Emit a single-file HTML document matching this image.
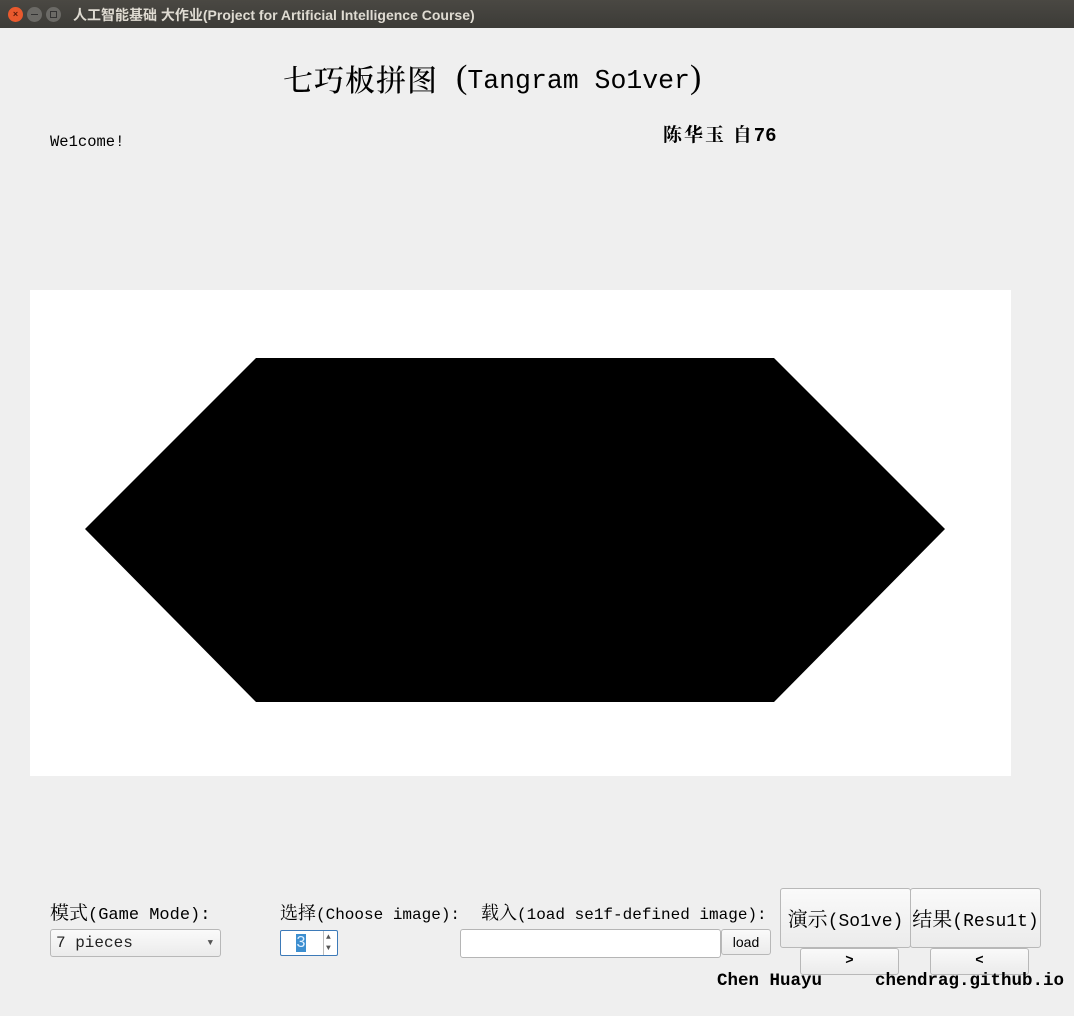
<!DOCTYPE html>
<html><head><meta charset="utf-8"><style>
*{margin:0;padding:0;box-sizing:border-box}
body{width:1074px;height:1016px;background:#efefef;position:relative;overflow:hidden;font-family:"Liberation Mono","Noto Serif CJK SC",monospace;color:#000}
.a{position:absolute;white-space:nowrap}
.tb{position:absolute;left:0;top:0;width:1074px;height:28px;background:linear-gradient(#4a4843,#3c3b37);}
.cj{font-family:"Noto Serif CJK SC","Noto Sans CJK SC",serif}
.btn{position:absolute;background:linear-gradient(#fafafa,#ebebeb);border:1px solid #b8b8b8;border-radius:3px;text-align:center}
</style></head><body>
<div class="tb">
<div class="a" style="left:8px;top:7px;width:15px;height:15px;border-radius:50%;background:#e9592d;color:#5a1a08;font:bold 9px 'Liberation Sans';text-align:center;line-height:15px">×</div>
<div class="a" style="left:27px;top:7px;width:15px;height:15px;border-radius:50%;background:#6b6a66;"><div style="margin:7px 4px;height:1px;background:#333"></div></div>
<div class="a" style="left:46px;top:7px;width:15px;height:15px;border-radius:50%;background:#6b6a66;"><div style="margin:4px;width:7px;height:7px;border:1px solid #333"></div></div>
<div class="a" style="left:73px;top:5px;color:#dfdbd2;font:bold 14px 'Liberation Sans','Noto Sans CJK SC',sans-serif">人工智能基础 大作业(Project for Artificial Intelligence Course)</div>
</div>
<div class="a cj" style="left:283px;top:58px;height:40px;line-height:40px;font-size:30px;font-weight:500;letter-spacing:1px">七巧板拼图</div>
<div class="a" style="left:456px;top:58px;height:40px;line-height:40px;font-size:26.5px"><span style="font-family:'Liberation Serif';font-size:34px">(</span>Tangram So1ver<span style="font-family:'Liberation Serif';font-size:34px">)</span></div>
<div class="a" style="left:50px;top:133px;font-size:15.5px">We1come!</div>
<div class="a" style="left:663px;top:120px;font-size:19px;font-weight:bold"><span class="cj" style="letter-spacing:2px">陈华玉 自</span>76</div>
<div class="a" style="left:30px;top:290px;width:981px;height:486px;background:#fff"></div>
<svg class="a" style="left:0;top:0" width="1074" height="1016"><polygon points="256,358 774,358 945,529 774,702 256,702 85,529" fill="#000"/></svg>
<div class="a" style="left:50px;top:898px;font-size:17px"><span class="cj" style="font-size:19px">模式</span>(Game Mode):</div>
<div class="a" style="left:280px;top:899px;font-size:16px"><span class="cj" style="font-size:18px">选择</span>(Choose image):</div>
<div class="a" style="left:481px;top:899px;font-size:16px"><span class="cj" style="font-size:18px">载入</span>(1oad se1f-defined image):</div>
<div class="btn" style="left:50px;top:929px;width:171px;height:28px;text-align:left;padding-left:5px;line-height:26px;font-size:16px;color:#222">7 pieces<span style="position:absolute;right:7px;top:0;font-size:9px;color:#555">▼</span></div>
<div class="a" style="left:280px;top:930px;width:58px;height:26px;background:#fff;border:1px solid #3d7ab8;border-radius:2px">
<div class="a" style="left:15px;top:3px;width:10px;height:18px;background:#3d8fd0;color:#dfefff;font:16px 'Liberation Sans';line-height:18px;text-align:center">3</div>
<div class="a" style="left:42px;top:0;width:1px;height:24px;background:#bbb"></div>
<div class="a" style="left:45px;top:1px;font-size:8px;color:#555;line-height:11px">▲<br>▼</div></div>
<div class="a" style="left:460px;top:929px;width:261px;height:29px;background:#fff;border:1px solid #b5b5b5;border-radius:3px"></div>
<div class="btn" style="left:721px;top:929px;width:50px;height:26px;font:14px 'Liberation Sans','Noto Sans CJK SC',sans-serif;line-height:24px">load</div>
<div class="btn" style="left:780px;top:888px;width:131px;height:60px;line-height:58px;font-size:18px"><span class="cj" style="font-size:20px">演示</span>(So1ve)</div>
<div class="btn" style="left:910px;top:888px;width:131px;height:60px;line-height:58px;font-size:18px"><span class="cj" style="font-size:20px">结果</span>(Resu1t)</div>
<div class="btn" style="left:800px;top:948px;width:99px;height:27px;line-height:25px;font-size:14px;font-weight:bold">&gt;</div>
<div class="btn" style="left:930px;top:948px;width:99px;height:27px;line-height:25px;font-size:14px;font-weight:bold">&lt;</div>
<div class="a" style="left:717px;top:971px;font-size:17.5px;font-weight:bold">Chen Huayu</div>
<div class="a" style="left:875px;top:971px;font-size:17.5px;font-weight:bold">chendrag.github.io</div>
</body></html>
